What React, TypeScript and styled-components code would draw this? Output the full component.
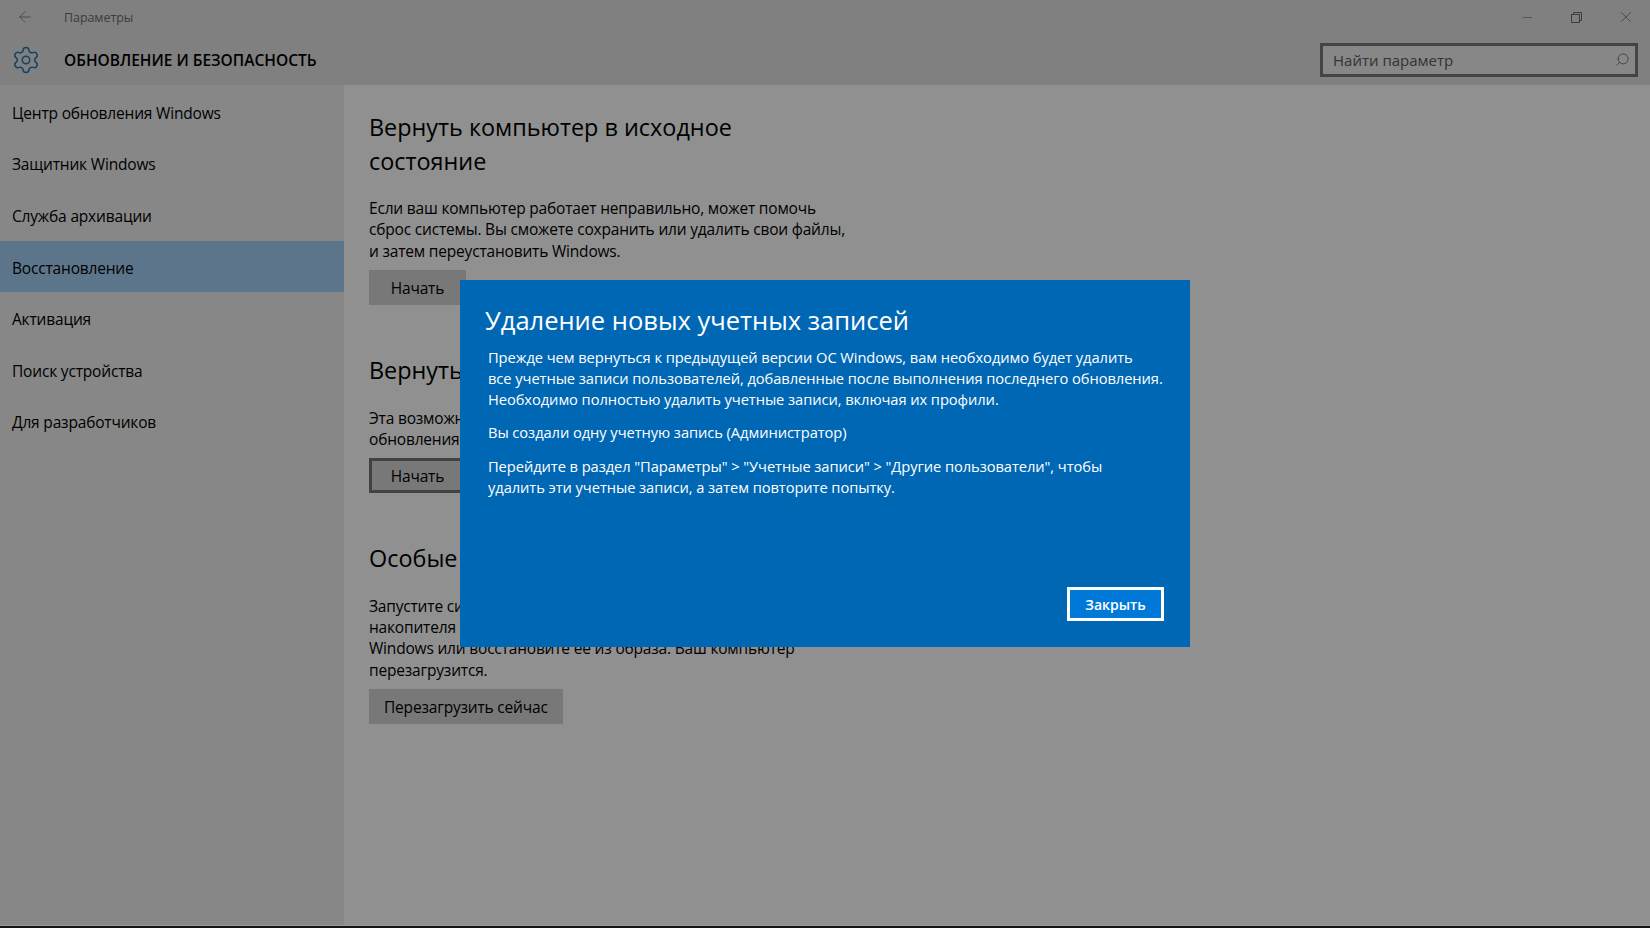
import React from "react";
import styled, { createGlobalStyle } from "styled-components";
import { ArrowLeft, Minus, Search, Settings, X } from "lucide-react";

const GlobalStyle = createGlobalStyle`
  html, body {
    margin: 0;
    padding: 0;
    height: 100%;
    overflow: hidden;
    background: #111;
  }
  * {
    box-sizing: border-box;
  }
`;

const Page = styled.div`
  position: relative;
  width: 1650px;
  height: 928px;
  overflow: hidden;
  font-family: "Open Sans", "Noto Sans", sans-serif;
  color: #000;
  display: flex;
  flex-direction: column;
  background: #f0f0f0;
  border-bottom: 2px solid #141414;
`;

const TopBar = styled.div`
  height: 34px;
  flex: none;
  display: flex;
  align-items: center;
  background: #d5d5d5;
  color: #666;
`;

const BackButton = styled.div`
  width: 64px;
  padding-left: 16px;
  display: flex;
  color: #666;
`;

const WindowTitle = styled.div`
  flex: 1;
  font-size: 12.4px;
`;

const WindowButtons = styled.div`
  display: flex;
  align-items: center;
  gap: 30px;
  padding-right: 15px;
  color: #666;
`;

const WindowButton = styled.div`
  width: 19px;
  height: 19px;
  display: flex;
  align-items: center;
  justify-content: center;
`;

const HeaderBar = styled.div`
  height: 51px;
  flex: none;
  display: flex;
  align-items: center;
  background: #d5d5d5;
  padding: 0 12px 0 11px;
`;

const GearIcon = styled.div`
  width: 53px;
  color: #1f6ea8;
  display: flex;
`;

const SectionTitle = styled.div`
  flex: 1;
  font-size: 15.5px;
  font-weight: 600;
`;

const SearchBox = styled.div`
  width: 318px;
  height: 34px;
  border: 3px solid #727272;
  background: #e2e2e2;
  display: flex;
  align-items: center;
  justify-content: space-between;
  padding: 0 5px 0 10px;
  font-size: 15px;
  color: #555;
`;

const Body = styled.div`
  flex: 1;
  display: flex;
  min-height: 0;
  border-bottom: 1px solid #fff;
`;

const Sidebar = styled.nav`
  width: 344px;
  flex: none;
  background: #e2e2e2;
  padding-top: 1px;
`;

const NavItem = styled.div<{ $active?: boolean }>`
  height: 51.6px;
  display: flex;
  align-items: center;
  padding: 2px 0 0 12px;
  font-size: 15.5px;
  letter-spacing: -0.18px;
  background: ${(p) => (p.$active ? "#9cc4e6" : "transparent")};
`;

const Content = styled.main`
  flex: 1;
  padding: 26px 0 0 25px;
`;

const Section = styled.section`
  width: 490px;
  margin-bottom: 49px;
`;

const Heading = styled.h2`
  margin: 0 0 20px;
  font-size: 23.4px;
  font-weight: 400;
  line-height: 33.6px;
`;

const Paragraph = styled.p`
  margin: 0 0 8px;
  font-size: 15.5px;
  letter-spacing: -0.19px;
  line-height: 21.3px;
`;

const ActionButton = styled.div<{ $focused?: boolean }>`
  display: inline-flex;
  align-items: center;
  justify-content: center;
  height: 35px;
  min-width: 97px;
  padding: 0 15px;
  font-size: 15.5px;
  letter-spacing: -0.19px;
  background: #c8c8c8;
  border: ${(p) => (p.$focused ? "3px solid #6f6f6f" : "none")};
`;

const Scrim = styled.div`
  position: absolute;
  inset: 0;
  background: rgba(0, 0, 0, 0.4);
`;

const Dialog = styled.div`
  position: absolute;
  left: 460px;
  top: 280px;
  width: 730px;
  height: 367px;
  background: #0067b5;
  color: #fff;
  padding: 22px 26px 26px 25px;
  display: flex;
  flex-direction: column;
`;

const DialogTitle = styled.h1`
  margin: 0 0 9px;
  font-size: 25.5px;
  font-weight: 400;
  line-height: 36px;
`;

const DialogText = styled.p`
  margin: 0 0 13px 3px;
  font-size: 14.7px;
  letter-spacing: -0.07px;
  line-height: 20.8px;
  white-space: nowrap;
`;

const DialogFooter = styled.div`
  margin-top: auto;
  display: flex;
  justify-content: flex-end;
`;

const CloseButton = styled.div`
  width: 97px;
  height: 34px;
  display: flex;
  align-items: center;
  justify-content: center;
  border: 3px solid #fff;
  background: #0078d7;
  font-size: 14px;
  font-weight: 600;
`;

const navItems = [
  "Центр обновления Windows",
  "Защитник Windows",
  "Служба архивации",
  "Восстановление",
  "Активация",
  "Поиск устройства",
  "Для разработчиков",
];

export default function App() {
  return (
    <Page>
      <GlobalStyle />
      <TopBar>
        <BackButton>
          <ArrowLeft size={18} strokeWidth={1} />
        </BackButton>
        <WindowTitle>Параметры</WindowTitle>
        <WindowButtons>
          <WindowButton>
            <Minus size={15} strokeWidth={1} />
          </WindowButton>
          <WindowButton>
            <svg width="11" height="11" viewBox="0 0 11 11" fill="none" stroke="currentColor">
              <rect x="0.5" y="2.5" width="8" height="8" />
              <path d="M2.5 2.5v-2h8v8h-2" />
            </svg>
          </WindowButton>
          <WindowButton>
            <X size={18} strokeWidth={1} />
          </WindowButton>
        </WindowButtons>
      </TopBar>
      <HeaderBar>
        <GearIcon>
          <Settings size={30} strokeWidth={1.2} />
        </GearIcon>
        <SectionTitle>ОБНОВЛЕНИЕ И БЕЗОПАСНОСТЬ</SectionTitle>
        <SearchBox>
          Найти параметр
          <Search size={15} strokeWidth={1.2} style={{ transform: "scaleX(-1)" }} />
        </SearchBox>
      </HeaderBar>
      <Body>
        <Sidebar>
          {navItems.map((item) => (
            <NavItem key={item} $active={item === "Восстановление"}>
              {item}
            </NavItem>
          ))}
        </Sidebar>
        <Content>
          <Section>
            <Heading>
              Вернуть компьютер в исходное
              <br />
              состояние
            </Heading>
            <Paragraph>
              Если ваш компьютер работает неправильно, может помочь
              <br />
              сброс системы. Вы сможете сохранить или удалить свои файлы,
              <br />и затем переустановить Windows.
            </Paragraph>
            <ActionButton>Начать</ActionButton>
          </Section>
          <Section>
            <Heading>Вернуться к Windows 8.1</Heading>
            <Paragraph>
              Эта возможность доступна в течение месяца после
              <br />
              обновления до Windows 10.
            </Paragraph>
            <ActionButton $focused>Начать</ActionButton>
          </Section>
          <Section>
            <Heading>Особые варианты загрузки</Heading>
            <Paragraph>
              Запустите систему с устройства или диска (например, USB-
              <br />
              накопителя или DVD-диска), измените параметры загрузки
              <br />
              Windows или восстановите ее из образа. Ваш компьютер
              <br />
              перезагрузится.
            </Paragraph>
            <ActionButton>Перезагрузить сейчас</ActionButton>
          </Section>
        </Content>
      </Body>
      <Scrim />
      <Dialog>
        <DialogTitle>Удаление новых учетных записей</DialogTitle>
        <DialogText>
          Прежде чем вернуться к предыдущей версии ОС Windows, вам необходимо будет удалить
          <br />
          все учетные записи пользователей, добавленные после выполнения последнего обновления.
          <br />
          Необходимо полностью удалить учетные записи, включая их профили.
        </DialogText>
        <DialogText>Вы создали одну учетную запись (Администратор)</DialogText>
        <DialogText>
          Перейдите в раздел "Параметры" &gt; "Учетные записи" &gt; "Другие пользователи", чтобы
          <br />
          удалить эти учетные записи, а затем повторите попытку.
        </DialogText>
        <DialogFooter>
          <CloseButton>Закрыть</CloseButton>
        </DialogFooter>
      </Dialog>
    </Page>
  );
}
